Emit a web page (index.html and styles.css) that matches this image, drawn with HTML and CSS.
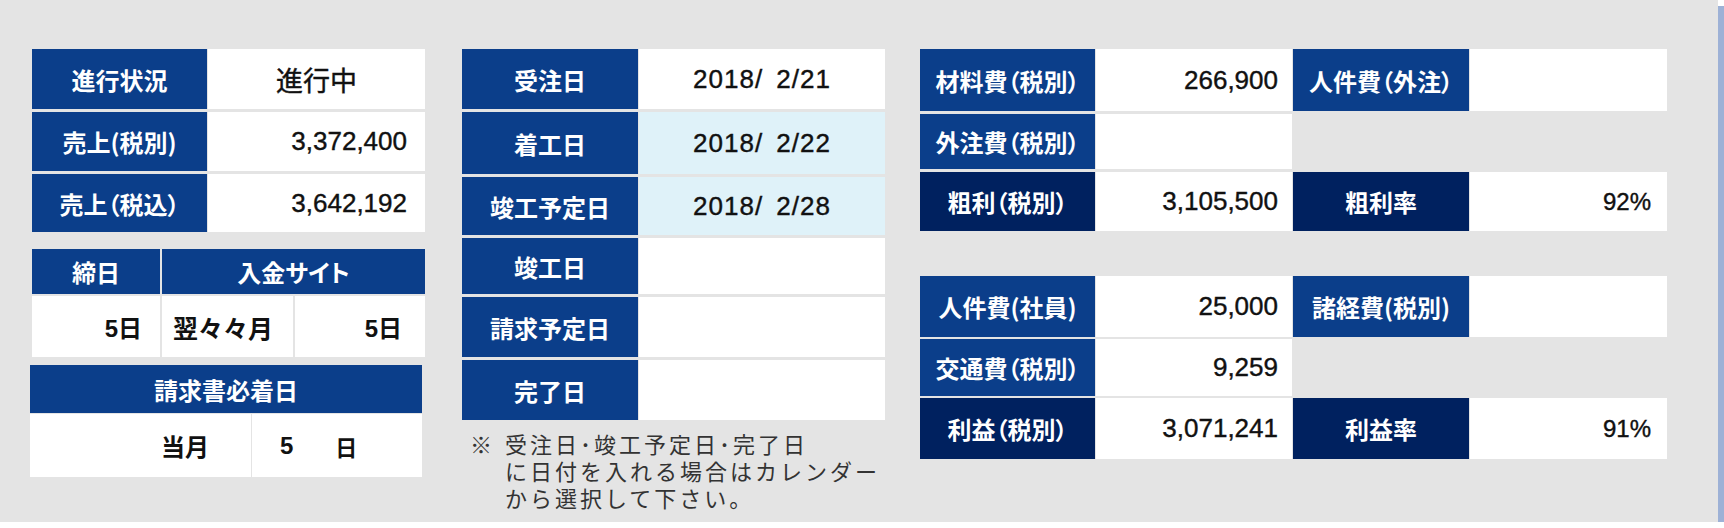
FILE: index.html
```html
<!DOCTYPE html>
<html lang="ja">
<head>
<meta charset="utf-8">
<title>案件概要</title>
<link rel="stylesheet" href="styles.css">
</head>
<body>
<div class="panel">
  <div class="col-left">
    <div class="grid g-status">
      <div class="lbl">進行状況</div><div class="val big">進行中</div>
      <div class="lbl">売上(税別)</div><div class="val num">3,372,400</div>
      <div class="lbl">売上（税込）</div><div class="val num">3,642,192</div>
    </div>
    <div class="grid g-site">
      <div class="lbl">締日</div><div class="lbl span2">入金サイト</div>
      <div class="val sv r1">5日</div><div class="val sv l1">翌々々月</div><div class="val sv r2">5日</div>
    </div>
    <div class="grid g-due">
      <div class="lbl span2">請求書必着日</div>
      <div class="val sv r3">当月</div><div class="val sv l2"><span>5</span><span class="unit">日</span></div>
    </div>
  </div>

  <div class="col-mid">
    <div class="grid g-dates">
      <div class="lbl">受注日</div><div class="val date">2018/ 2/21</div>
      <div class="lbl">着工日</div><div class="val date tint">2018/ 2/22</div>
      <div class="lbl">竣工予定日</div><div class="val date tint">2018/ 2/28</div>
      <div class="lbl">竣工日</div><div class="val"></div>
      <div class="lbl">請求予定日</div><div class="val"></div>
      <div class="lbl">完了日</div><div class="val"></div>
    </div>
    <div class="note">
      <div class="note-line"><span class="note-mark">※</span>受注日･竣工予定日･完了日</div>
      <div class="note-line indent">に日付を入れる場合はカレンダー</div>
      <div class="note-line indent">から選択して下さい。</div>
    </div>
  </div>

  <div class="col-right">
    <div class="grid g-cost">
      <div class="lbl">材料費（税別）</div><div class="val num">266,900</div>
      <div class="lbl">人件費（外注）</div><div class="val"></div>
      <div class="lbl">外注費（税別）</div><div class="val"></div>
      <div class="blank"></div><div class="blank"></div>
      <div class="lbl dark">粗利（税別）</div><div class="val num">3,105,500</div>
      <div class="lbl dark">粗利率</div><div class="val pct">92%</div>
    </div>
    <div class="grid g-cost g-cost2">
      <div class="lbl">人件費(社員)</div><div class="val num">25,000</div>
      <div class="lbl">諸経費(税別)</div><div class="val"></div>
      <div class="lbl">交通費（税別）</div><div class="val num">9,259</div>
      <div class="blank"></div><div class="blank"></div>
      <div class="lbl dark">利益（税別）</div><div class="val num">3,071,241</div>
      <div class="lbl dark">利益率</div><div class="val pct">91%</div>
    </div>
  </div>
</div>
</body>
</html>
```

FILE: styles.css
```css
html, body {
  margin: 0;
  background: #ffffff;
}

.panel {
  width: 1718px;
  height: 522px;
  box-sizing: border-box;
  background: #e4e4e4;
  box-shadow: 6px 6px 0 #9db1d6;
  padding: 49px 0 0 32px;
  display: flex;
  align-items: flex-start;
  font-family: "Noto Sans CJK JP", sans-serif;
}

.col-left {
  width: 393px;
  display: flex;
  flex-direction: column;
}

.col-mid {
  width: 423px;
  margin-left: 37px;
}

.col-right {
  width: 747px;
  margin-left: 35px;
}

.grid {
  display: grid;
}

.lbl {
  background: #0b3e8a;
  color: #ffffff;
  font-weight: 700;
  font-size: 24px;
  display: flex;
  align-items: center;
  justify-content: center;
  font-feature-settings: "palt";
  white-space: nowrap;
}

.lbl.dark {
  background: #00215f;
}

.span2 {
  grid-column: span 2;
}

.val {
  background: #ffffff;
  display: flex;
  align-items: center;
  color: #111111;
  white-space: nowrap;
}

.val.tint {
  background: #dff2f9;
}

.blank {
  background: transparent;
}

.big {
  justify-content: center;
  font-size: 27px;
  -webkit-text-stroke: 0.4px #111111;
}

.num {
  justify-content: flex-end;
  padding-right: 18px;
  font-family: "Liberation Sans", sans-serif;
  font-size: 26px;
  -webkit-text-stroke: 0.4px #111111;
}

.pct {
  justify-content: flex-end;
  padding-right: 16px;
  font-family: "Liberation Sans", sans-serif;
  font-size: 24px;
  -webkit-text-stroke: 0.4px #111111;
}

.date {
  justify-content: center;
  font-family: "Liberation Sans", sans-serif;
  font-size: 26px;
  word-spacing: 5px;
  letter-spacing: 1px;
  -webkit-text-stroke: 0.4px #111111;
}

.sv {
  font-family: "Liberation Sans", "Noto Sans CJK JP", sans-serif;
  font-weight: 700;
  font-size: 24px;
}

.r1 { justify-content: flex-end; padding-right: 18px; }
.l1 { padding-left: 11px; font-size: 25px; }
.r2 { justify-content: flex-end; padding-right: 23px; }
.r3 { justify-content: flex-end; padding-right: 42px; }
.l2 { padding-left: 28px; }
.unit { margin-left: 42px; font-size: 22px; }

/* left blocks */
.g-status {
  grid-template-columns: 175px 217px;
  grid-template-rows: 60px 59px 58px;
  column-gap: 1px;
  row-gap: 3px;
}

.g-site {
  margin-top: 17px;
  grid-template-columns: 128px 131px 130px;
  grid-template-rows: 45px 61px;
  column-gap: 2px;
  row-gap: 2px;
}

.g-due {
  margin-top: 8px;
  margin-left: -2px;
  width: 392px;
  grid-template-columns: 221px 170px;
  grid-template-rows: 48px 63px;
  column-gap: 1px;
  row-gap: 1px;
}

/* middle block */
.g-dates {
  grid-template-columns: 176px 246px;
  grid-template-rows: 60px 62px 58px 56px 60px 60px;
  column-gap: 1px;
  row-gap: 3px;
}

.note {
  margin: 12px 0 0 8px;
  font-family: "Liberation Sans", "Noto Sans CJK JP", sans-serif;
  font-size: 22px;
  color: #333333;
  letter-spacing: 3px;
  white-space: nowrap;
}

.note-line {
  height: 27px;
  line-height: 27px;
}

.note-line.indent {
  padding-left: 35px;
}

.note-mark {
  display: inline-block;
  width: 35px;
  letter-spacing: 0;
}

/* right blocks */
.g-cost {
  grid-template-columns: 175px 196px 176px 197px;
  grid-template-rows: 62px 55px 59px;
  column-gap: 1px;
  row-gap: 3px;
}

.g-cost .num {
  padding-right: 14px;
}

.g-cost2 {
  margin-top: 45px;
  grid-template-rows: 61px 57px 61px;
  row-gap: 2px;
}
```
